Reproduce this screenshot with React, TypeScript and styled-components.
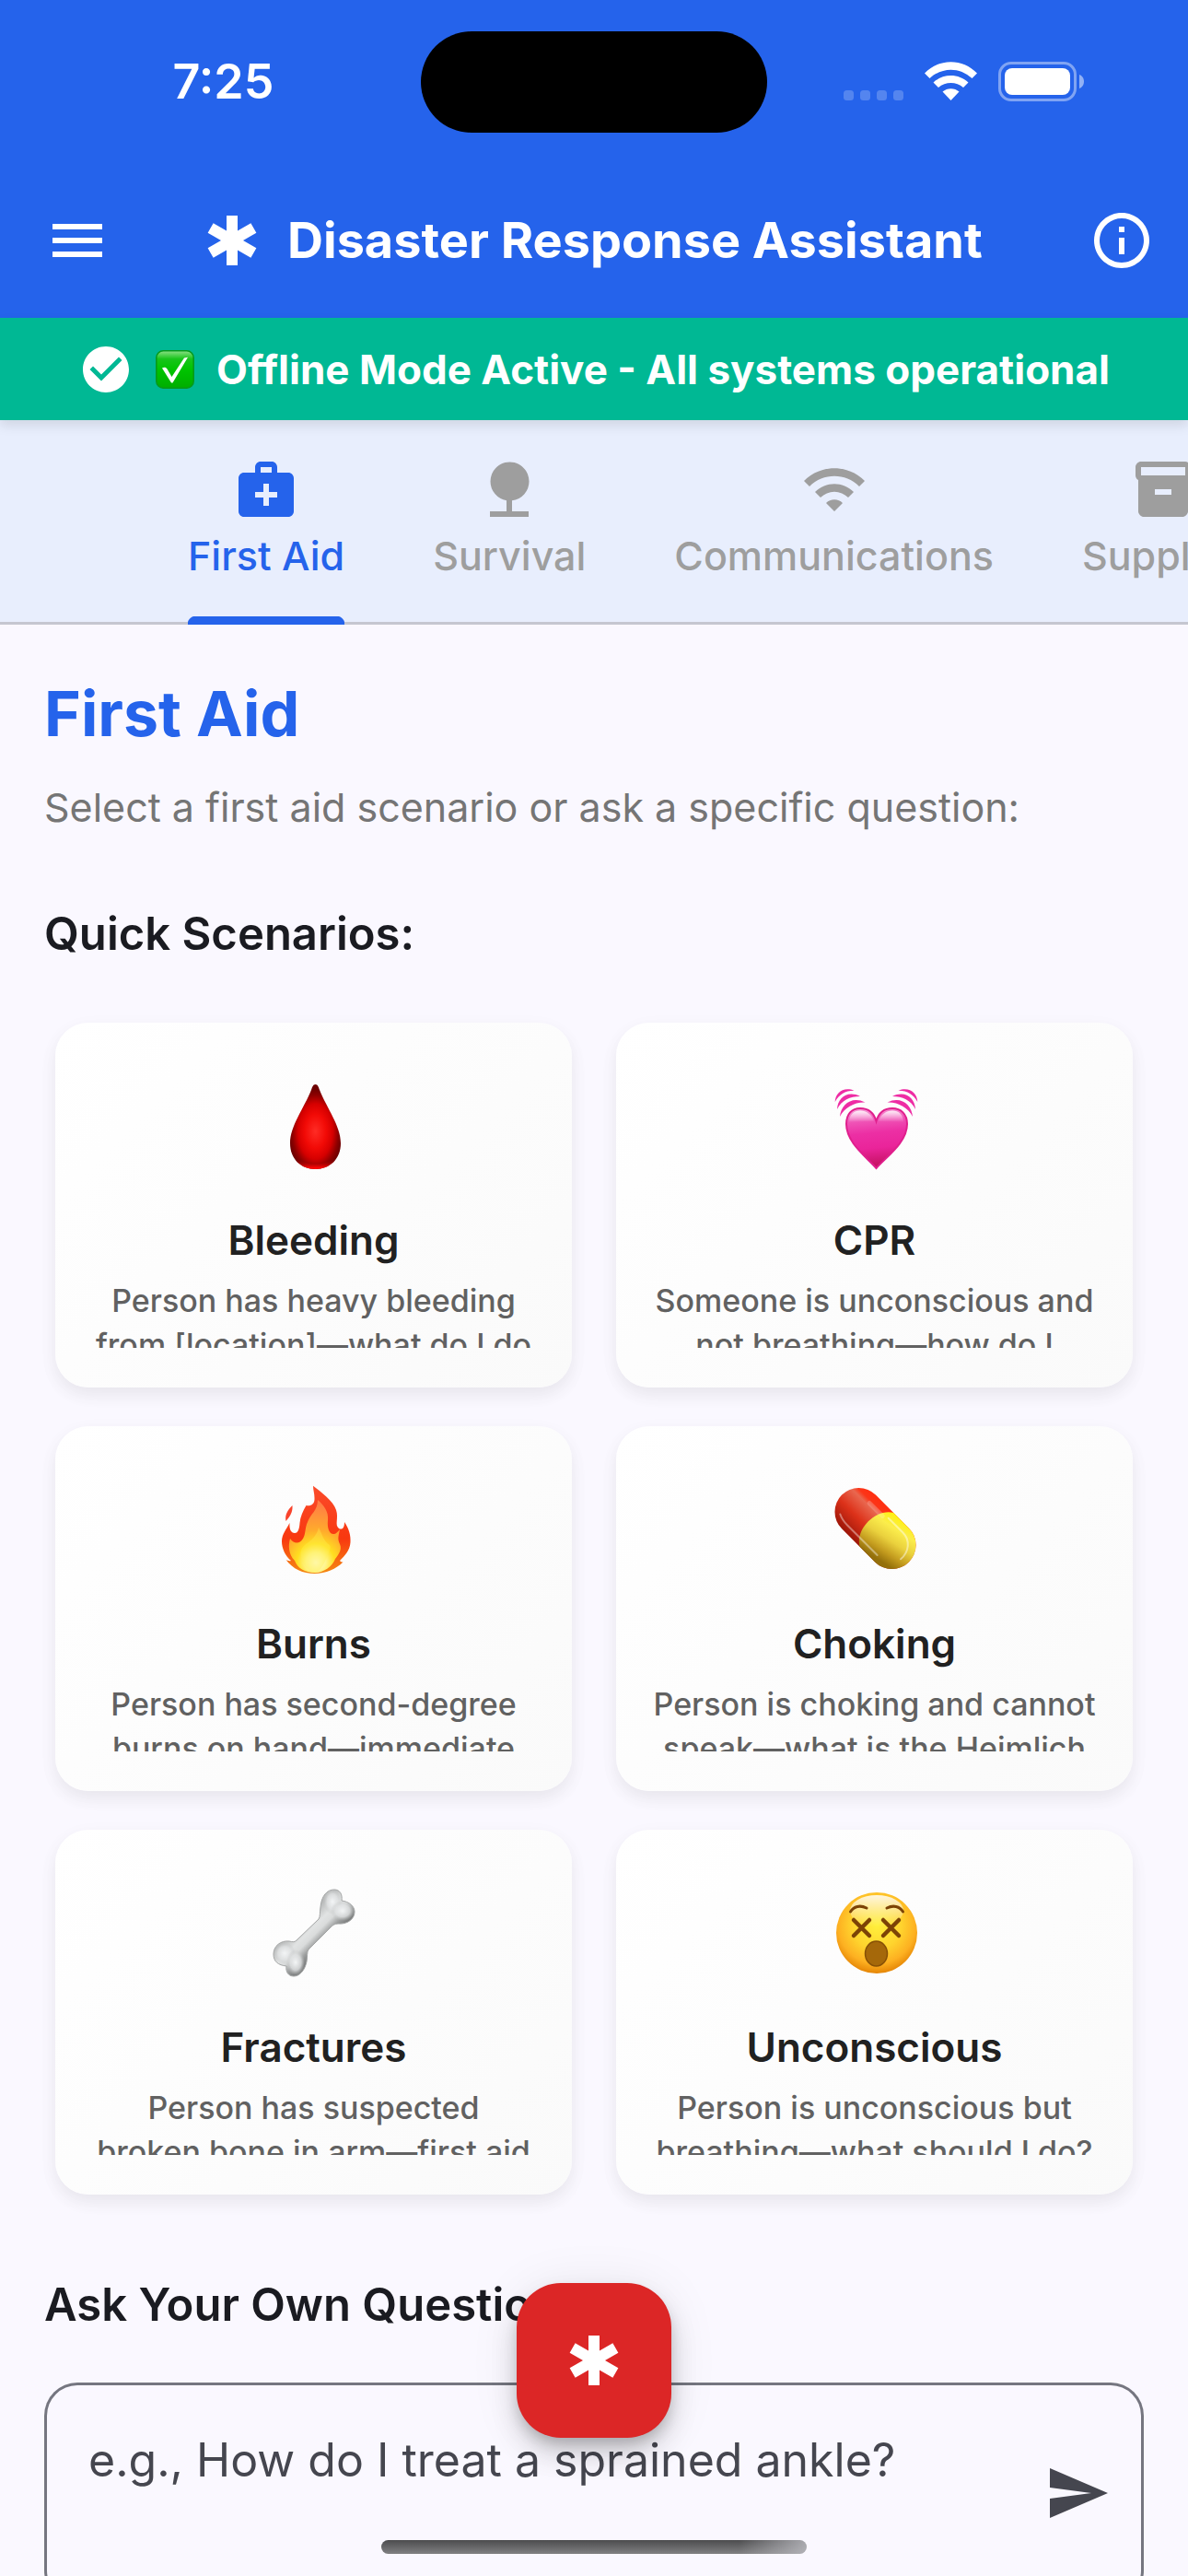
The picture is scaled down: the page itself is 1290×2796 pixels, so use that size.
import React, { useState } from 'react';
import styled, { createGlobalStyle } from 'styled-components';
import {
  MdCheckCircle,
  MdEmergency,
  MdInfoOutline,
  MdInventory2,
  MdMedicalServices,
  MdMenu,
  MdNature,
  MdSend,
  MdWifi,
} from 'react-icons/md';

const color = {
  primary: '#2563eb',
  success: '#00b894',
  danger: '#dc2626',
  surface: '#faf8ff',
  tabs: '#e8eefd',
  outline: '#757680',
  divider: '#c5c6d0',
  ink: '#1a1b21',
  inkSoft: '#45464f',
  muted: '#9e9e9e',
};

const GlobalStyle = createGlobalStyle`
  *, *::before, *::after { box-sizing: border-box; }
  body {
    margin: 0;
    background: ${color.surface};
    font-family: Inter, "Liberation Sans", sans-serif;
    -webkit-font-smoothing: antialiased;
  }
  button, textarea { font: inherit; }
  button {
    margin: 0;
    padding: 0;
    border: 0;
    background: none;
    color: inherit;
    cursor: pointer;
  }
  h1, h2, h3, p { margin: 0; }
  svg { display: block; flex: none; }
`;

const Screen = styled.div`
  position: relative;
  display: flex;
  flex-direction: column;
  height: 100vh;
  overflow: hidden;
  color: ${color.ink};
`;

const StatusBar = styled.div`
  display: grid;
  grid-template-columns: 1fr 376px 1fr;
  align-items: center;
  height: 177px;
  flex: none;
  background: ${color.primary};
  color: #fff;
`;

const Time = styled.div`
  padding-left: 28px;
  text-align: center;
  font-size: 52px;
  line-height: 60px;
  font-weight: 600;
`;

const Island = styled.div`
  height: 110px;
  border-radius: 55px;
  background: #000;
`;

const StatusIcons = styled.div`
  display: flex;
  justify-content: center;
  gap: 23px;
  padding-right: 30px;
`;

const AppBar = styled.header`
  display: flex;
  align-items: center;
  height: 168px;
  flex: none;
  background: ${color.primary};
  color: #fff;
`;

const IconButton = styled.button<{ $wide?: boolean }>`
  display: flex;
  align-items: center;
  justify-content: center;
  width: ${({ $wide }) => ($wide ? 168 : 144)}px;
  height: 144px;
  flex: none;
  font-size: 72px;
`;

const Title = styled.h1`
  display: flex;
  align-items: center;
  gap: 24px;
  flex: 1;
  min-width: 0;
  padding-left: 48px;
  font-size: 54px;
  line-height: 72px;
  font-weight: 700;
  white-space: nowrap;

  svg { font-size: 72px; }
`;

const Banner = styled.div`
  position: relative;
  z-index: 1;
  display: flex;
  align-items: center;
  justify-content: center;
  gap: 24px;
  height: 111px;
  flex: none;
  background: ${color.success};
  box-shadow: 0 6px 12px rgba(0, 0, 0, 0.1);
  color: #fff;
  font-size: 44px;
  line-height: 60px;
  font-weight: 700;
  white-space: nowrap;
`;

const TabBar = styled.nav`
  display: flex;
  height: 222px;
  flex: none;
  padding-left: 156px;
  overflow: hidden;
  background: ${color.tabs};
  box-shadow: inset 0 -3px ${color.divider};
`;

const Tab = styled.button<{ $active?: boolean }>`
  display: flex;
  flex: none;
  padding: 0 48px;
  color: ${({ $active }) => ($active ? color.primary : color.muted)};
`;

const TabLabel = styled.span<{ $active?: boolean }>`
  display: flex;
  flex-direction: column;
  align-items: center;
  gap: 6px;
  height: 222px;
  padding-top: 39px;
  background: ${({ $active }) =>
    $active
      ? `radial-gradient(circle at 9px 9px, ${color.primary} 9px, transparent 10px) 0 100% / 9px 9px no-repeat,
         radial-gradient(circle at 0 9px, ${color.primary} 9px, transparent 10px) 100% 100% / 9px 9px no-repeat,
         linear-gradient(${color.primary}, ${color.primary}) 50% 100% / calc(100% - 18px) 9px no-repeat`
      : 'none'};
  font-size: 43px;
  line-height: 60px;
  font-weight: 500;

  svg { font-size: 72px; }
`;

const Content = styled.main`
  flex: 1;
  min-height: 0;
  padding: 48px;
  overflow-y: auto;
  scrollbar-width: none;
`;

const PageTitle = styled.h2`
  color: ${color.primary};
  font-size: 68px;
  line-height: 96px;
  font-weight: 700;
`;

const Intro = styled.p`
  margin-top: 24px;
  color: #757575;
  font-size: 43px;
  line-height: 60px;
`;

const SectionTitle = styled.h3`
  font-size: 49px;
  line-height: 72px;
  font-weight: 600;
`;

const Section = styled.section<{ $top: number }>`
  margin-top: ${({ $top }) => $top}px;
`;

const CardGrid = styled.div`
  display: grid;
  grid-template-columns: 1fr 1fr;
  gap: 42px 48px;
  padding: 60px 12px 0;
`;

const Card = styled.button`
  display: flex;
  flex-direction: column;
  align-items: center;
  padding: 64px 36px 43px;
  border-radius: 36px;
  background: linear-gradient(135deg, #fff, #fafafa);
  box-shadow: 0 6px 24px rgba(0, 0, 0, 0.03), 0 9px 18px rgba(0, 0, 0, 0.05);
`;

const CardTitle = styled.span`
  margin-top: 46px;
  color: #212121;
  font-size: 44px;
  line-height: 60px;
  font-weight: 600;
`;

const CardText = styled.span`
  width: 100%;
  height: 75px;
  margin-top: 12px;
  overflow: hidden;
  color: #616161;
  font-size: 34px;
  line-height: 48px;
  font-weight: 500;
  text-align: center;
`;

const Line = styled.span`
  display: block;
  white-space: nowrap;
`;

const Field = styled.div`
  display: flex;
  align-items: center;
  height: 240px;
  margin-top: 48px;
  border-radius: 36px;
  box-shadow: inset 0 0 0 3px ${color.outline};
  color: ${color.inkSoft};
`;

const Question = styled.textarea`
  flex: 1;
  min-width: 0;
  height: 100%;
  padding: 48px 0 48px 48px;
  border: 0;
  outline: 0;
  resize: none;
  background: none;
  color: ${color.ink};
  font-size: 50px;
  line-height: 72px;

  &::placeholder {
    color: ${color.inkSoft};
    opacity: 1;
  }
`;

const EmergencyButton = styled.button`
  position: absolute;
  bottom: 150px;
  left: 50%;
  display: flex;
  align-items: center;
  justify-content: center;
  width: 168px;
  height: 168px;
  margin-left: -84px;
  border-radius: 48px;
  background: ${color.danger};
  box-shadow: 0 9px 15px -3px rgba(0, 0, 0, 0.2), 0 18px 30px rgba(0, 0, 0, 0.14),
    0 3px 54px rgba(0, 0, 0, 0.08);
  color: #fff;
  font-size: 72px;
`;

const HomeIndicator = styled.div`
  position: absolute;
  bottom: 24px;
  left: 50%;
  width: 462px;
  height: 15px;
  margin-left: -231px;
  border-radius: 8px;
  background: linear-gradient(90deg, transparent 84%, rgba(190, 190, 196, 0.8)),
    linear-gradient(#4c4c4e, #808082);
`;

const SignalIcon = () => (
  <svg width="65" height="43" viewBox="0 0 65 43" fill="#fff" fillOpacity="0.22">
    {[0, 18, 36, 54].map((x) => (
      <rect key={x} x={x} y="31" width="11" height="11" rx="3.5" />
    ))}
  </svg>
);

const StatusWifiIcon = () => (
  <svg width="57" height="43" viewBox="0 0 57 43" fill="#fff">
    <path d="M0 12.5C15.5-4 41.5-4 57 12.5L51.5 18C38 5.5 19 5.5 5.5 18Z" />
    <path d="M9.5 22.5C20 12.5 37 12.5 47.5 22.5L42 28C34.5 21.3 22.5 21.3 15 28Z" />
    <path d="M19.5 32.5C24.5 28 32.5 28 37.5 32.5L28.5 42Z" />
  </svg>
);

const BatteryIcon = () => (
  <svg width="93" height="43" viewBox="0 0 93 43" fill="none">
    <rect x="1.5" y="1.5" width="82" height="40" rx="12.5" stroke="#fff" strokeOpacity="0.42" strokeWidth="3" />
    <rect x="7" y="7" width="71" height="29" rx="8" fill="#fff" />
    <path d="M88 14c3 1 5 4 5 7.5s-2 6.5-5 7.5z" fill="#fff" fillOpacity="0.5" />
  </svg>
);

const CheckEmoji = () => (
  <svg width="42" height="42" viewBox="0 0 42 42">
    <defs>
      <linearGradient id="check" x2="0" y2="1">
        <stop offset="0" stopColor="#8be086" />
        <stop offset="0.22" stopColor="#17c41a" />
        <stop offset="0.5" stopColor="#00c400" />
        <stop offset="1" stopColor="#00ad00" />
      </linearGradient>
    </defs>
    <rect x="0.8" y="0.8" width="40.4" height="40.4" rx="7.5" fill="url(#check)" stroke="#069a1c" strokeWidth="1.6" />
    <path d="M7 19.5C9 18 11.5 18.5 12.5 20.5L17.5 29L31 8.5L35 7.8L18.5 35.5H17Z" fill="#fff" />
  </svg>
);

const DropEmoji = () => (
  <svg width="96" height="96" viewBox="0 0 96 96">
    <defs>
      <radialGradient id="drop" gradientUnits="userSpaceOnUse" cx="0" cy="0" r="1" gradientTransform="translate(49.5 54) scale(29 46)">
        <stop offset="0" stopColor="#ff2c25" />
        <stop offset="0.4" stopColor="#f20a06" />
        <stop offset="0.65" stopColor="#d60000" />
        <stop offset="0.86" stopColor="#8d0000" />
        <stop offset="1" stopColor="#6d0000" />
      </radialGradient>
      <linearGradient id="dropRim" x2="0" y2="1">
        <stop offset="0.6" stopColor="#7a0000" stopOpacity="0" />
        <stop offset="0.95" stopColor="#ff0505" />
      </linearGradient>
    </defs>
    <path d="M49.5 3C52 3 53 6 54 9C62 29 77 48 77 67C77 84 65 95 49.5 95C34 95 22 84 22 67C22 48 37 29 45 9C46 6 47 3 49.5 3Z" fill="url(#drop)" />
    <path d="M22 67C22 84 34 95 49.5 95C65 95 77 84 77 67C74 82 64 89.5 49.5 89.5C35 89.5 25 82 22 67Z" fill="url(#dropRim)" />
  </svg>
);

const heartWaves = (
  <>
    <path d="M10 38C11 25 23 15 37.5 22.5C26 22 15 28 10 38Z" />
    <path d="M7 30C7.5 18 18 9 32 16C21 16 12 20 7 30Z" />
    <path d="M4.7 22C5 12 14 5 25.5 9.7C16 9.5 9 14 4.7 22Z" />
  </>
);

const HeartEmoji = () => (
  <svg width="96" height="96" viewBox="0 0 96 96">
    <defs>
      <linearGradient id="heart" x2="0.1" y2="1">
        <stop offset="0" stopColor="#f7a5da" />
        <stop offset="0.25" stopColor="#ef53b6" />
        <stop offset="0.45" stopColor="#ec2fa4" />
        <stop offset="0.7" stopColor="#ea249a" />
        <stop offset="1" stopColor="#c51262" />
      </linearGradient>
      <linearGradient id="gloss" x2="0" y2="1">
        <stop offset="0" stopColor="#fff" stopOpacity="0.85" />
        <stop offset="1" stopColor="#fff" stopOpacity="0" />
      </linearGradient>
    </defs>
    <g fill="#ee2ca4">
      {heartWaves}
      <g transform="matrix(-1 0 0 1 99 0)">{heartWaves}</g>
    </g>
    <path d="M49.5 94C38 81 17 66 17 46C17 35 23 29 32 29C41 29 47 34 49.5 43C52 34 58 29 67 29C76 29 83 35 83 46C83 66 61 81 49.5 94Z" fill="url(#heart)" stroke="#e01f8d" strokeWidth="2" />
    <path d="M20 44C20 36 25 31.5 32 31.5C39 31.5 45 36 47 43Z" fill="url(#gloss)" />
    <path d="M79 44C79 36 74 31.5 67 31.5C60 31.5 54 36 52 43Z" fill="url(#gloss)" />
  </svg>
);

const FireEmoji = () => (
  <svg width="96" height="96" viewBox="0 0 96 96">
    <defs>
      <linearGradient id="flame" x2="0" y2="1">
        <stop offset="0" stopColor="#fb4b2b" />
        <stop offset="0.6" stopColor="#f8380f" />
        <stop offset="1" stopColor="#f58a12" />
      </linearGradient>
      <radialGradient id="core" gradientUnits="userSpaceOnUse" cx="50" cy="84" r="64">
        <stop offset="0" stopColor="#fffbd2" />
        <stop offset="0.17" stopColor="#fff48a" />
        <stop offset="0.32" stopColor="#ffdf20" />
        <stop offset="0.55" stopColor="#ffab2c" />
        <stop offset="1" stopColor="#ff7d45" />
      </radialGradient>
    </defs>
    <path d="M47 0.7C55 7 69 17 72 27C75 36 70 43 75 47C79 49 81 46 81 40C86 47 88 55 87.5 62C87 71 81 77 76 82C77 83 78 83.5 79.5 83.5C72 91 61 96 48.5 96C36 96 25 91 17.5 81C19 82 21 82.5 23 82C17 77 13 69 13 61C13 53 18 48 21.5 41C21 48 23 52 27 52C31 52 32 47 32.5 41C33 34 36 28 39.5 22C44 23 49 21 48.5 14C48.5 9 47 5 47 0.7Z" fill="url(#flame)" />
    <path d="M24.5 22C19 27 16 33 17.5 39C22 34 25 29 24.5 22Z" fill="#f9432c" />
    <path d="M52 16C59 22 64 29 63 38C62 47 65 54 70 53C72 53 74 50 76 48C75 54 73 58 76 64C79 70 74 76 71 80C68 88 59 95 49 95C38 95 30 90 27 82C20 75 20 65 22 58C25 63 32 65 36 58C39 53 38 46 41 40C44 31 52 28 52 16Z" fill="url(#core)" />
    <path d="M53 46C57 53 58 61 65 65C67 68 64 73 62 78C58 88 53 95 49 95C43 95 36 87 34 78C32 70 36 67 39 64C45 60 51 55 53 46Z" fill="#fff152" fillOpacity="0.35" />
  </svg>
);

const PillEmoji = () => (
  <svg width="96" height="96" viewBox="0 0 96 96">
    <defs>
      <linearGradient id="pillRed" x2="0" y2="1">
        <stop offset="0" stopColor="#ff2e10" />
        <stop offset="0.16" stopColor="#fb3518" />
        <stop offset="0.26" stopColor="#e9674f" />
        <stop offset="0.6" stopColor="#dc3119" />
        <stop offset="1" stopColor="#9d1608" />
      </linearGradient>
      <linearGradient id="pillYellow" x2="0.25" y2="1">
        <stop offset="0" stopColor="#fff200" />
        <stop offset="0.3" stopColor="#fbed4c" />
        <stop offset="0.55" stopColor="#ead13d" />
        <stop offset="0.8" stopColor="#c39b1e" />
        <stop offset="1" stopColor="#94700b" />
      </linearGradient>
    </defs>
    <g transform="translate(48.5 47) rotate(45)">
      <rect x="-51.5" y="-26" width="103" height="52" rx="26" fill="url(#pillRed)" />
      <path d="M2-26H25.5A26 26 0 0 1 25.5 26H2C-15 16-15-16 2-26Z" fill="url(#pillYellow)" />
      <path d="M-38 16C-34 18-30 19-24 19H22" fill="none" stroke="#fff" strokeOpacity="0.4" strokeWidth="2" strokeLinecap="round" />
      <path d="M2-18H24C36-18 44-8 43 4" fill="none" stroke="#fff" strokeOpacity="0.45" strokeWidth="2" strokeLinecap="round" />
      <path d="M-24-15H-4" stroke="#fff" strokeOpacity="0.2" strokeWidth="5" strokeLinecap="round" />
    </g>
  </svg>
);

const BoneEmoji = () => (
  <svg width="96" height="96" viewBox="0 0 96 96">
    <defs>
      <linearGradient id="bone" gradientUnits="userSpaceOnUse" x1="36" y1="36" x2="60" y2="60">
        <stop offset="0" stopColor="#b9bbbb" />
        <stop offset="0.35" stopColor="#e1e3e3" />
        <stop offset="0.55" stopColor="#dadcdc" />
        <stop offset="0.8" stopColor="#9b9d9d" />
        <stop offset="1" stopColor="#7d7f7f" />
      </linearGradient>
      <radialGradient id="knob">
        <stop offset="0" stopColor="#f3f5f6" />
        <stop offset="0.6" stopColor="#e0e2e3" stopOpacity="0.8" />
        <stop offset="1" stopColor="#c0c2c2" stopOpacity="0" />
      </radialGradient>
    </defs>
    <path d="M29 56L53 33C55 30 54 26 55 20C56 8 62 1 70 1C76 1 79 6 78 13C86 14 92 19 92 25C92 33 84 39 74 38C70 38 68 40 66 42L42 66C40 69 41 73 40 79C38 89 32 95 26 95C20 95 17 90 18 84C9 83 4 79 4 71C4 62 12 56 21 57C25 58 27 58 29 56Z" fill="url(#bone)" stroke="#a3a5a5" strokeWidth="1" />
    <ellipse cx="68" cy="14" rx="10" ry="14" fill="url(#knob)" />
    <ellipse cx="79" cy="24" rx="13" ry="11" fill="url(#knob)" />
    <ellipse cx="16" cy="70" rx="12" ry="12" fill="url(#knob)" />
    <ellipse cx="28" cy="80" rx="10" ry="14" fill="url(#knob)" />
  </svg>
);

const DizzyEmoji = () => (
  <svg width="96" height="96" viewBox="0 0 96 96">
    <defs>
      <radialGradient id="face" cx="0.5" cy="0.4" r="0.6">
        <stop offset="0" stopColor="#fff03c" />
        <stop offset="0.5" stopColor="#ffd42e" />
        <stop offset="0.8" stopColor="#fdb021" />
        <stop offset="1" stopColor="#e58505" />
      </radialGradient>
      <linearGradient id="shine" x2="0" y2="1">
        <stop offset="0" stopColor="#fff" stopOpacity="0.85" />
        <stop offset="1" stopColor="#fff" stopOpacity="0" />
      </linearGradient>
    </defs>
    <circle cx="50" cy="48" r="44" fill="url(#face)" />
    <ellipse cx="50" cy="24" rx="29" ry="17" fill="url(#shine)" />
    <g fill="none" stroke="#7c4306" strokeLinecap="round">
      <path d="M21.5 25C25 19 32 17.5 39 21M78.5 25C75 19 68 17.5 61 21" strokeWidth="3" />
      <path d="M25 34L42 51M42 34L25 51M57 34L74 51M74 34L57 51" strokeWidth="4.5" />
    </g>
    <ellipse cx="49.5" cy="70.5" rx="12" ry="13.5" fill="#a5680a" stroke="#875006" strokeWidth="1.5" />
  </svg>
);

const tabs = [
  { label: 'First Aid', Icon: MdMedicalServices },
  { label: 'Survival', Icon: MdNature },
  { label: 'Communications', Icon: MdWifi },
  { label: 'Supplies', Icon: MdInventory2 },
];

const scenarios = [
  { title: 'Bleeding', Emoji: DropEmoji, lines: ['Person has heavy bleeding', 'from [location]—what do I do'] },
  { title: 'CPR', Emoji: HeartEmoji, lines: ['Someone is unconscious and', 'not breathing—how do I'] },
  { title: 'Burns', Emoji: FireEmoji, lines: ['Person has second-degree', 'burns on hand—immediate'] },
  { title: 'Choking', Emoji: PillEmoji, lines: ['Person is choking and cannot', 'speak—what is the Heimlich'] },
  { title: 'Fractures', Emoji: BoneEmoji, lines: ['Person has suspected', 'broken bone in arm—first aid'] },
  { title: 'Unconscious', Emoji: DizzyEmoji, lines: ['Person is unconscious but', 'breathing—what should I do?'] },
];

export default function App() {
  const [active, setActive] = useState('First Aid');
  const [question, setQuestion] = useState('');

  return (
    <Screen>
      <GlobalStyle />
      <StatusBar>
        <Time>7:25</Time>
        <Island />
        <StatusIcons>
          <SignalIcon />
          <StatusWifiIcon />
          <BatteryIcon />
        </StatusIcons>
      </StatusBar>
      <AppBar>
        <IconButton $wide aria-label="Open menu">
          <MdMenu />
        </IconButton>
        <Title>
          <MdEmergency />
          Disaster Response Assistant
        </Title>
        <IconButton aria-label="About">
          <MdInfoOutline />
        </IconButton>
      </AppBar>
      <Banner role="status">
        <MdCheckCircle size={60} />
        <CheckEmoji />
        <span>Offline Mode Active - All systems operational</span>
      </Banner>
      <TabBar>
        {tabs.map(({ label, Icon }) => (
          <Tab key={label} $active={label === active} onClick={() => setActive(label)}>
            <TabLabel $active={label === active}>
              <Icon />
              {label}
            </TabLabel>
          </Tab>
        ))}
      </TabBar>
      <Content>
        <PageTitle>First Aid</PageTitle>
        <Intro>Select a first aid scenario or ask a specific question:</Intro>
        <Section $top={72}>
          <SectionTitle>Quick Scenarios:</SectionTitle>
          <CardGrid>
            {scenarios.map(({ title, Emoji, lines }) => (
              <Card key={title}>
                <Emoji />
                <CardTitle>{title}</CardTitle>
                <CardText>
                  {lines.map((line) => (
                    <Line key={line}>{line}</Line>
                  ))}
                </CardText>
              </Card>
            ))}
          </CardGrid>
        </Section>
        <Section $top={84}>
          <SectionTitle as="label" htmlFor="question">
            Ask Your Own Question:
          </SectionTitle>
          <Field>
            <Question
              id="question"
              placeholder="e.g., How do I treat a sprained ankle?"
              value={question}
              onChange={(event) => setQuestion(event.target.value)}
            />
            <IconButton aria-label="Send question">
              <MdSend />
            </IconButton>
          </Field>
        </Section>
      </Content>
      <EmergencyButton aria-label="Emergency">
        <MdEmergency />
      </EmergencyButton>
      <HomeIndicator />
    </Screen>
  );
}
